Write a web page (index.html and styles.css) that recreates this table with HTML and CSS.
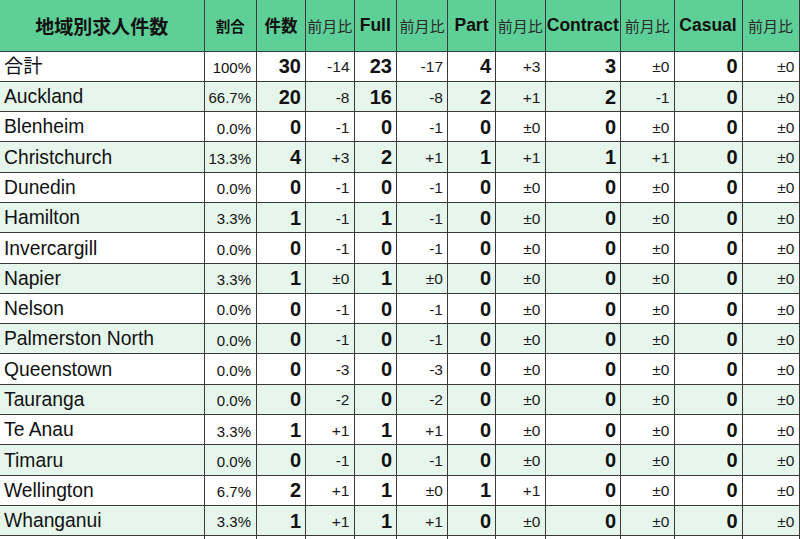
FILE: index.html
```html
<!DOCTYPE html>
<html lang="ja">
<head>
<meta charset="utf-8">
<title>地域別求人件数</title>
<link rel="stylesheet" href="styles.css">
</head>
<body>
<table class="jobs">
  <colgroup>
    <col class="c-name"><col class="c-pct"><col class="c-cnt"><col class="c-d1">
    <col class="c-full"><col class="c-d2"><col class="c-part"><col class="c-d3">
    <col class="c-contract"><col class="c-d4"><col class="c-casual"><col class="c-d5">
  </colgroup>
  <thead>
    <tr>
      <th class="h-title">地域別求人件数</th>
      <th class="h-small">割合</th>
      <th class="h-cjk">件数</th>
      <th class="h-diff">前月比</th>
      <th class="h-big">Full</th>
      <th class="h-diff">前月比</th>
      <th class="h-big">Part</th>
      <th class="h-diff">前月比</th>
      <th class="h-big">Contract</th>
      <th class="h-diff">前月比</th>
      <th class="h-big">Casual</th>
      <th class="h-diff">前月比</th>
    </tr>
  </thead>
  <tbody>
    <tr><td class="name">合計</td><td class="pct">100%</td><td class="num">30</td><td class="diff">-14</td><td class="num">23</td><td class="diff">-17</td><td class="num">4</td><td class="diff">+3</td><td class="num">3</td><td class="diff">±0</td><td class="num">0</td><td class="diff">±0</td></tr>
    <tr><td class="name">Auckland</td><td class="pct">66.7%</td><td class="num">20</td><td class="diff">-8</td><td class="num">16</td><td class="diff">-8</td><td class="num">2</td><td class="diff">+1</td><td class="num">2</td><td class="diff">-1</td><td class="num">0</td><td class="diff">±0</td></tr>
    <tr><td class="name">Blenheim</td><td class="pct">0.0%</td><td class="num">0</td><td class="diff">-1</td><td class="num">0</td><td class="diff">-1</td><td class="num">0</td><td class="diff">±0</td><td class="num">0</td><td class="diff">±0</td><td class="num">0</td><td class="diff">±0</td></tr>
    <tr><td class="name">Christchurch</td><td class="pct">13.3%</td><td class="num">4</td><td class="diff">+3</td><td class="num">2</td><td class="diff">+1</td><td class="num">1</td><td class="diff">+1</td><td class="num">1</td><td class="diff">+1</td><td class="num">0</td><td class="diff">±0</td></tr>
    <tr><td class="name">Dunedin</td><td class="pct">0.0%</td><td class="num">0</td><td class="diff">-1</td><td class="num">0</td><td class="diff">-1</td><td class="num">0</td><td class="diff">±0</td><td class="num">0</td><td class="diff">±0</td><td class="num">0</td><td class="diff">±0</td></tr>
    <tr><td class="name">Hamilton</td><td class="pct">3.3%</td><td class="num">1</td><td class="diff">-1</td><td class="num">1</td><td class="diff">-1</td><td class="num">0</td><td class="diff">±0</td><td class="num">0</td><td class="diff">±0</td><td class="num">0</td><td class="diff">±0</td></tr>
    <tr><td class="name">Invercargill</td><td class="pct">0.0%</td><td class="num">0</td><td class="diff">-1</td><td class="num">0</td><td class="diff">-1</td><td class="num">0</td><td class="diff">±0</td><td class="num">0</td><td class="diff">±0</td><td class="num">0</td><td class="diff">±0</td></tr>
    <tr><td class="name">Napier</td><td class="pct">3.3%</td><td class="num">1</td><td class="diff">±0</td><td class="num">1</td><td class="diff">±0</td><td class="num">0</td><td class="diff">±0</td><td class="num">0</td><td class="diff">±0</td><td class="num">0</td><td class="diff">±0</td></tr>
    <tr><td class="name">Nelson</td><td class="pct">0.0%</td><td class="num">0</td><td class="diff">-1</td><td class="num">0</td><td class="diff">-1</td><td class="num">0</td><td class="diff">±0</td><td class="num">0</td><td class="diff">±0</td><td class="num">0</td><td class="diff">±0</td></tr>
    <tr><td class="name">Palmerston North</td><td class="pct">0.0%</td><td class="num">0</td><td class="diff">-1</td><td class="num">0</td><td class="diff">-1</td><td class="num">0</td><td class="diff">±0</td><td class="num">0</td><td class="diff">±0</td><td class="num">0</td><td class="diff">±0</td></tr>
    <tr><td class="name">Queenstown</td><td class="pct">0.0%</td><td class="num">0</td><td class="diff">-3</td><td class="num">0</td><td class="diff">-3</td><td class="num">0</td><td class="diff">±0</td><td class="num">0</td><td class="diff">±0</td><td class="num">0</td><td class="diff">±0</td></tr>
    <tr><td class="name">Tauranga</td><td class="pct">0.0%</td><td class="num">0</td><td class="diff">-2</td><td class="num">0</td><td class="diff">-2</td><td class="num">0</td><td class="diff">±0</td><td class="num">0</td><td class="diff">±0</td><td class="num">0</td><td class="diff">±0</td></tr>
    <tr><td class="name">Te Anau</td><td class="pct">3.3%</td><td class="num">1</td><td class="diff">+1</td><td class="num">1</td><td class="diff">+1</td><td class="num">0</td><td class="diff">±0</td><td class="num">0</td><td class="diff">±0</td><td class="num">0</td><td class="diff">±0</td></tr>
    <tr><td class="name">Timaru</td><td class="pct">0.0%</td><td class="num">0</td><td class="diff">-1</td><td class="num">0</td><td class="diff">-1</td><td class="num">0</td><td class="diff">±0</td><td class="num">0</td><td class="diff">±0</td><td class="num">0</td><td class="diff">±0</td></tr>
    <tr><td class="name">Wellington</td><td class="pct">6.7%</td><td class="num">2</td><td class="diff">+1</td><td class="num">1</td><td class="diff">±0</td><td class="num">1</td><td class="diff">+1</td><td class="num">0</td><td class="diff">±0</td><td class="num">0</td><td class="diff">±0</td></tr>
    <tr><td class="name">Whanganui</td><td class="pct">3.3%</td><td class="num">1</td><td class="diff">+1</td><td class="num">1</td><td class="diff">+1</td><td class="num">0</td><td class="diff">±0</td><td class="num">0</td><td class="diff">±0</td><td class="num">0</td><td class="diff">±0</td></tr>
    <tr class="spill"><td></td><td></td><td></td><td></td><td></td><td></td><td></td><td></td><td></td><td></td><td></td><td></td></tr>
  </tbody>
</table>
</body>
</html>
```

FILE: styles.css
```css
html, body {
  margin: 0;
  padding: 0;
  background: #ffffff;
}

body {
  font-family: "Liberation Sans", Arial, "Noto Sans CJK JP", sans-serif;
  color: #111;
  overflow: hidden;
  height: 539px;
}

.jobs {
  width: 799px;
  table-layout: fixed;
  border-collapse: collapse;
  border-spacing: 0;
}

.c-name { width: 204px; }
.c-pct { width: 52.5px; }
.c-cnt { width: 49px; }
.c-d1 { width: 48.5px; }
.c-full { width: 42.5px; }
.c-d2 { width: 51px; }
.c-part { width: 48px; }
.c-d3 { width: 49.5px; }
.c-contract { width: 75.5px; }
.c-d4 { width: 53.5px; }
.c-casual { width: 68px; }
.c-d5 { width: 57px; }

.jobs th,
.jobs td {
  border-left: 1px solid #3a3a3a;
  border-right: 1px solid #3a3a3a;
  border-bottom: 1px solid #3a3a3a;
  padding: 0;
  white-space: nowrap;
  overflow: hidden;
}

.jobs th:first-child,
.jobs td:first-child {
  border-left: none;
}

.jobs thead tr {
  height: 51px;
}

.jobs th {
  background: #5ecf96;
  color: #111;
  text-align: center;
  vertical-align: middle;
  font-weight: bold;
}

.h-title {
  font-size: 19px;
  font-family: "Noto Sans CJK JP", sans-serif;
}

.h-small {
  font-size: 14.5px;
  font-family: "Noto Sans CJK JP", sans-serif;
}

.h-cjk {
  font-family: "Noto Sans CJK JP", sans-serif;
  font-size: 16.5px;
}

.jobs th.h-big {
  font-size: 17.5px;
  padding-top: 1px;
}

.jobs th.h-diff {
  font-family: "Noto Sans CJK JP", sans-serif;
  font-size: 15px;
  font-weight: normal;
  color: #2a2a2a;
}

.jobs tbody tr {
  height: 30.3px;
}

.jobs tbody tr.spill {
  height: 3px;
}

.jobs tr.spill td {
  border-bottom: none;
  padding: 0;
  line-height: 0;
}

.jobs tbody tr:nth-child(even) td {
  background: #e6f6ec;
}

.jobs td {
  vertical-align: bottom;
  text-align: right;
  padding-right: 4px;
  line-height: 18px;
  color: #111;
}

.jobs td.name {
  text-align: left;
  padding-left: 4px;
  padding-right: 0;
  padding-bottom: 5px;
  font-size: 19.3px;
}

.jobs td.pct {
  font-size: 15px;
  padding-right: 5px;
  padding-bottom: 3.8px;
}

.jobs td.num {
  font-size: 20px;
  font-weight: bold;
  padding-bottom: 5.6px;
}

.jobs td.diff {
  font-size: 15.5px;
  color: #1a1a1a;
  padding-bottom: 4.6px;
}
```
